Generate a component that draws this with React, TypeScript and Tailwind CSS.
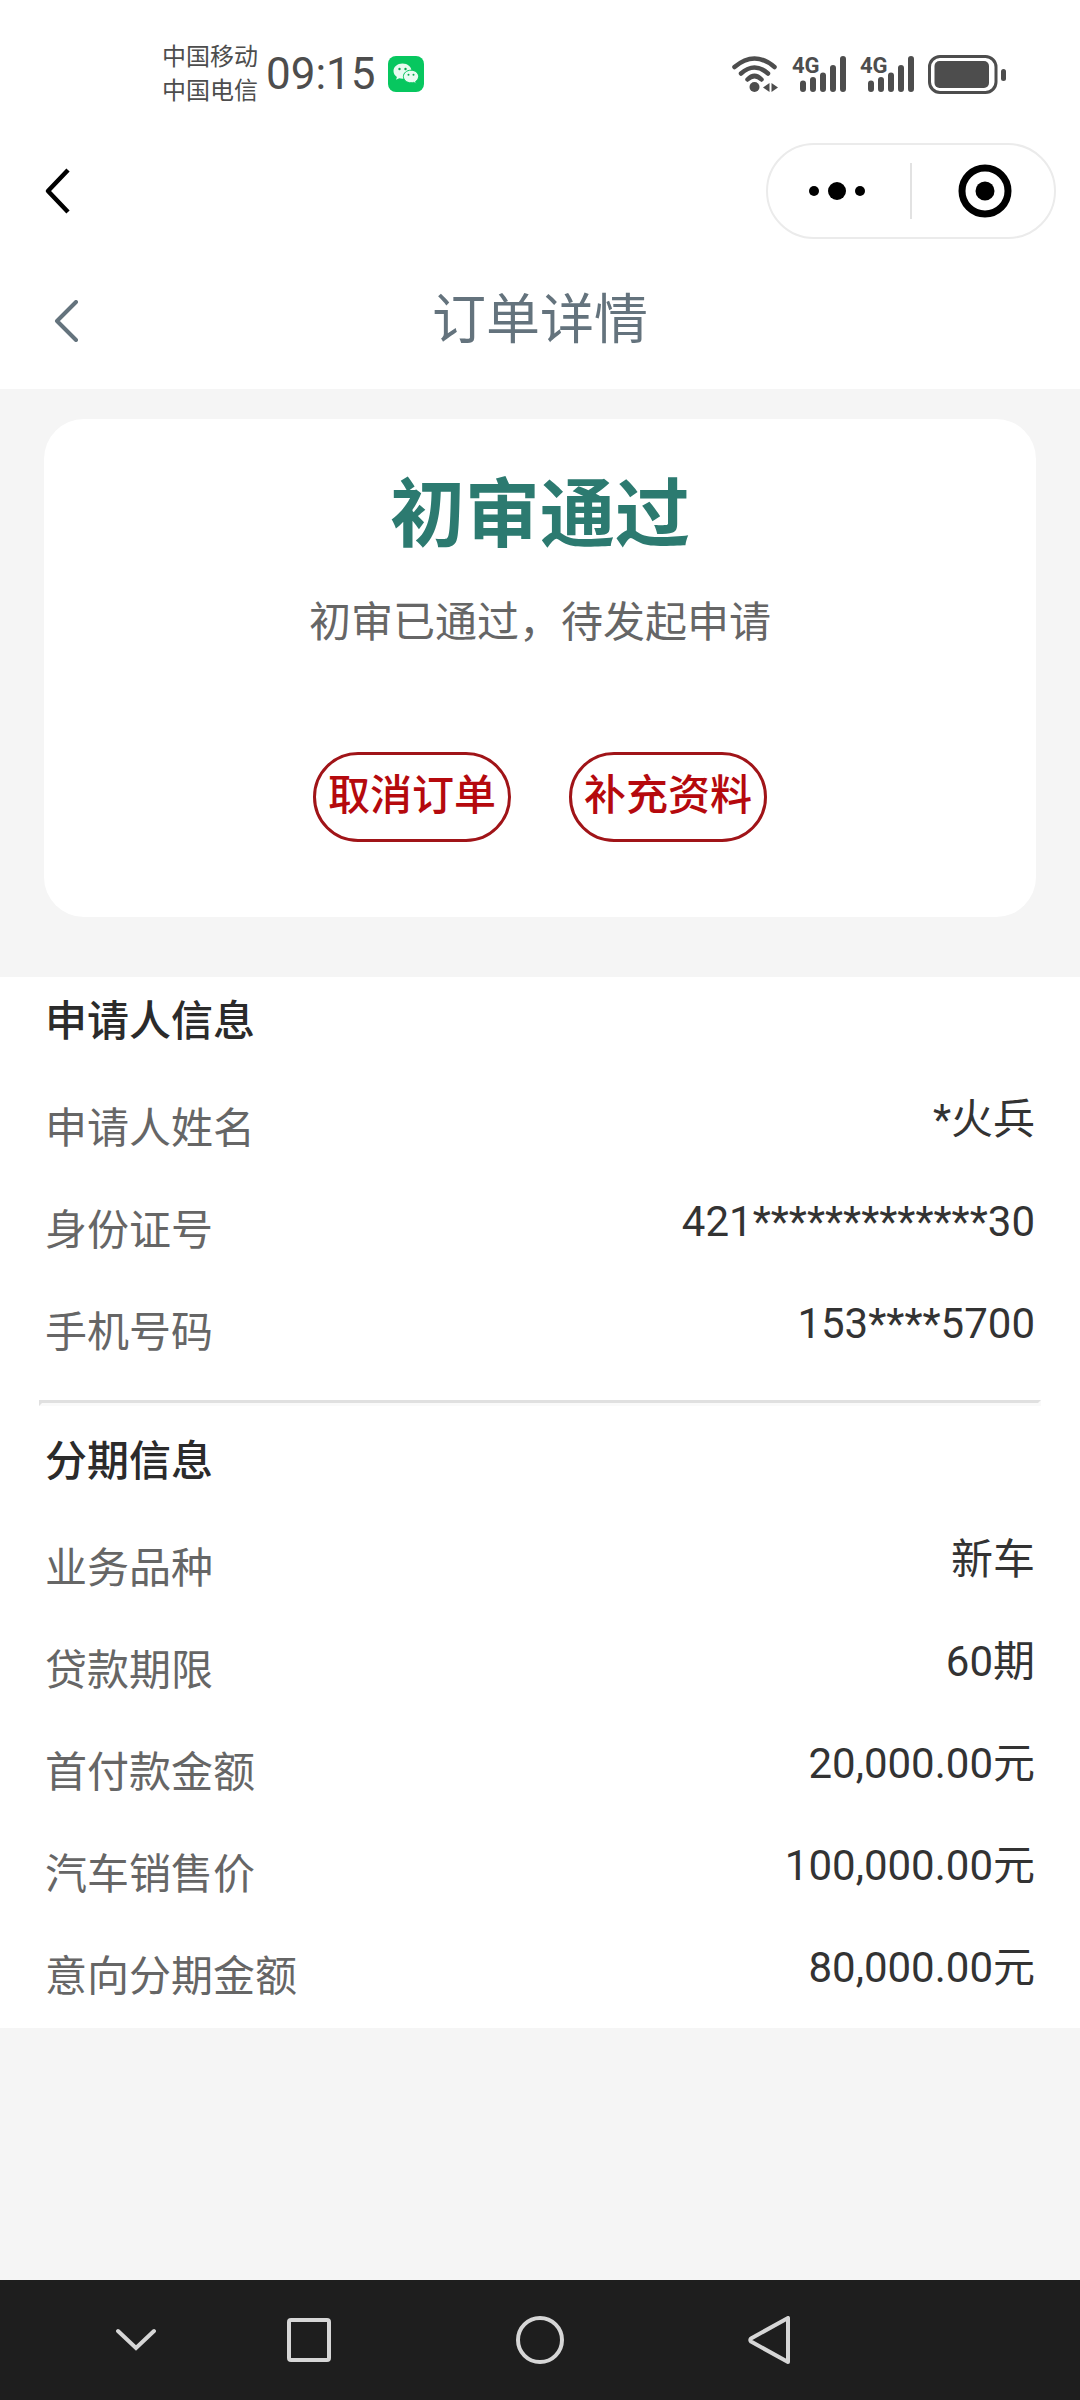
import React from 'react';

type Item = { label: string; value: string };

const applicant: Item[] = [
  { label: '申请人姓名', value: '*火兵' },
  { label: '身份证号', value: '421*************30' },
  { label: '手机号码', value: '153****5700' },
];

const installment: Item[] = [
  { label: '业务品种', value: '新车' },
  { label: '贷款期限', value: '60期' },
  { label: '首付款金额', value: '20,000.00元' },
  { label: '汽车销售价', value: '100,000.00元' },
  { label: '意向分期金额', value: '80,000.00元' },
];

const WechatIcon = () => (
  <svg width="36" height="36" viewBox="0 0 36 36" aria-hidden="true">
    <rect width="36" height="36" rx="8" fill="#07c75f" />
    <path d="M14.5 7.5c-5.1 0-9 3.3-9 7.6 0 2.5 1.3 4.6 3.4 6l-.8 2.7 3.1-1.6c1 .3 2.1.5 3.3.5 5.1 0 9-3.3 9-7.6s-3.9-7.6-9-7.6z" fill="#e9fbf1" />
    <path d="M23 14.2c-4.3 0-7.6 2.8-7.6 6.3s3.3 6.3 7.6 6.3c1 0 1.9-.1 2.7-.4l2.6 1.4-.7-2.3c1.8-1.2 3-2.9 3-5 0-3.5-3.3-6.3-7.6-6.3z" fill="#e9fbf1" stroke="#07c75f" />
    <g fill="#07a950">
      <circle cx="11.5" cy="13" r="1.2" />
      <circle cx="17.5" cy="13" r="1.2" />
      <circle cx="20.5" cy="18.7" r="1" />
      <circle cx="25.5" cy="18.7" r="1" />
    </g>
  </svg>
);

const WifiIcon = () => (
  <svg width="46" height="36" viewBox="0 0 46 36" aria-hidden="true">
    <g fill="none" stroke="currentColor" strokeWidth="4.5" strokeLinecap="round">
      <path d="M2.500 11Q22.500-6 42.500 11" />
      <path d="M9 17.500Q22.500 5.500 36 17.500" />
      <path d="M15.500 23.500Q22.500 16.500 29.500 23.500" />
    </g>
    <circle cx="22.5" cy="31" r="5" fill="currentColor" />
    <path d="M37.500 27v9L31 31.500zM39.500 27v9l6.500-4.500z" fill="currentColor" />
  </svg>
);

const SignalIcon = () => (
  <svg width="54" height="52" viewBox="0 -8 54 52" aria-hidden="true">
    <text x="0" y="17" fontSize="22" fontWeight="700" fill="currentColor">4G</text>
    <g stroke="currentColor" strokeWidth="6" strokeLinecap="round">
      <path d="M11 27.500V33M21 24V33M31 19.500V33M41 12V33M51 3V33" />
    </g>
  </svg>
);

const BatteryIcon = () => (
  <svg width="78" height="39" viewBox="0 0 78 39" aria-hidden="true">
    <rect x="1.5" y="1.5" width="66.5" height="36" rx="10.5" fill="none" stroke="currentColor" strokeWidth="3" />
    <rect x="6.5" y="6" width="54.5" height="27" rx="5" fill="currentColor" />
    <rect x="73" y="14" width="5" height="12" rx="2.5" fill="currentColor" />
  </svg>
);

const StatusBar = () => (
  <div className="flex items-center justify-between pt-10 pl-[162px] pr-[74px] text-[#4d4d4d]">
    <div className="flex items-center">
      <div className="text-2xl leading-[34px]">
        <p>中国移动</p>
        <p>中国电信</p>
      </div>
      <span className="ml-2 mr-3 text-[44px] leading-[54px]">09:15</span>
      <WechatIcon />
    </div>
    <div className="flex items-center gap-3.5">
      <WifiIcon />
      <SignalIcon />
      <SignalIcon />
      <BatteryIcon />
    </div>
  </div>
);

const MiniProgramBar = () => (
  <div className="flex items-center justify-between pt-[35px] pl-11 pr-6">
    <button aria-label="返回">
      <svg width="28" height="46" viewBox="0 0 28 46" fill="none" stroke="#000" strokeWidth="4.5">
        <path d="M24 2L4 23l20 21" strokeLinejoin="round" />
      </svg>
    </button>
    <div className="flex h-24 w-[290px] items-center rounded-full border-2 border-[#ebebeb]">
      <button aria-label="更多" className="flex w-1/2 justify-center pr-1">
        <svg width="56" height="20" viewBox="0 0 56 20">
          <circle cx="5" cy="10" r="5" />
          <circle cx="28" cy="10" r="9" />
          <circle cx="51" cy="10" r="5" />
        </svg>
      </button>
      <span className="h-14 w-0.5 bg-[#e2e2e2]" />
      <button aria-label="关闭" className="flex w-1/2 justify-center pl-1">
        <svg width="54" height="54" viewBox="0 0 54 54">
          <circle cx="27" cy="27" r="23" fill="none" stroke="#000" strokeWidth="7" />
          <circle cx="27" cy="27" r="9.5" />
        </svg>
      </button>
    </div>
  </div>
);

const TitleBar = () => (
  <header className="grid grid-cols-[1fr_auto_1fr] items-center px-[53px] pt-[46px] pb-8 text-[#64737d]">
    <button aria-label="上一页" className="justify-self-start">
      <svg width="26" height="42" viewBox="0 0 26 42" fill="none" stroke="currentColor" strokeWidth="4">
        <path d="M23 2L4 21l19 19" strokeLinejoin="round" strokeLinecap="round" />
      </svg>
    </button>
    <h1 className="text-[54px] leading-[72px]">订单详情</h1>
  </header>
);

const InfoSection = ({ title, items }: { title: string; items: Item[] }) => (
  <section className="px-[45px] pt-3.5 text-[42px]">
    <h2 className="pb-[25px] font-medium leading-[62px] text-[#2b2b2b]">{title}</h2>
    <dl>
      {items.map((item) => (
        <div key={item.label} className="flex items-start justify-between">
          <dt className="leading-[102px] text-[#666]">{item.label}</dt>
          <dd className="leading-[84px] text-[#333]">{item.value}</dd>
        </div>
      ))}
    </dl>
  </section>
);

const actionClass =
  'rounded-full border-3 border-[#a01418] px-3 pt-2.5 pb-3 text-[42px] font-medium leading-[62px] text-[#b5090d]';

const NavBar = () => (
  <nav className="grid h-[120px] grid-cols-[1fr_2fr_2fr_2fr] place-items-center bg-[#1e1e1e] pl-[78px] pr-[193px] text-[#d6d6d6]">
    <button aria-label="收起">
      <svg width="40" height="24" viewBox="0 0 40 24" fill="none" stroke="currentColor" strokeWidth="4">
        <path d="M2 3l18 17L38 3" strokeLinecap="round" />
      </svg>
    </button>
    <button aria-label="最近任务">
      <svg width="44" height="44" viewBox="0 0 44 44" fill="none" stroke="currentColor" strokeWidth="4">
        <rect x="2" y="2" width="40" height="40" rx="2" />
      </svg>
    </button>
    <button aria-label="主屏幕">
      <svg width="48" height="48" viewBox="0 0 48 48" fill="none" stroke="currentColor" strokeWidth="4">
        <circle cx="24" cy="24" r="22" />
      </svg>
    </button>
    <button aria-label="返回上级">
      <svg width="46" height="48" viewBox="0 0 46 48" fill="none" stroke="currentColor" strokeWidth="4">
        <path d="M40 2v44L3 25.500Q1.500 24 3 22.500z" strokeLinejoin="round" />
      </svg>
    </button>
  </nav>
);

const App = () => {
  return (
    <div className="flex min-h-screen flex-col bg-[#f5f5f5] font-['Roboto','Noto_Sans_CJK_SC',sans-serif]" lang="zh-CN">
      <div className="bg-white">
        <StatusBar />
        <MiniProgramBar />
        <TitleBar />
      </div>

      <main className="flex-1">
        {/* Review status */}
        <section className="mx-11 mt-[30px] mb-[60px] flex flex-col items-center rounded-[40px] bg-white pt-[46px] pb-[75px]">
          <h2 className="text-[75px] font-bold leading-[100px] text-[#2c7a70]">初审通过</h2>
          <p className="mt-[27px] text-[42px] leading-[62px] text-[#666]">初审已通过，待发起申请</p>
          <div className="mt-[98px] flex gap-[58px]">
            <button className={actionClass}>取消订单</button>
            <button className={actionClass}>补充资料</button>
          </div>
        </section>

        {/* Order info */}
        <div className="bg-white">
          <InfoSection title="申请人信息" items={applicant} />
          <hr className="mx-[39px] mt-4 mb-[11px] border-3 border-t-[#e0e0e0] border-l-[#e0e0e0] border-r-[#fafafa] border-b-[#fafafa]" />
          <InfoSection title="分期信息" items={installment} />
        </div>
      </main>

      <NavBar />
    </div>
  );
};

export default App;
